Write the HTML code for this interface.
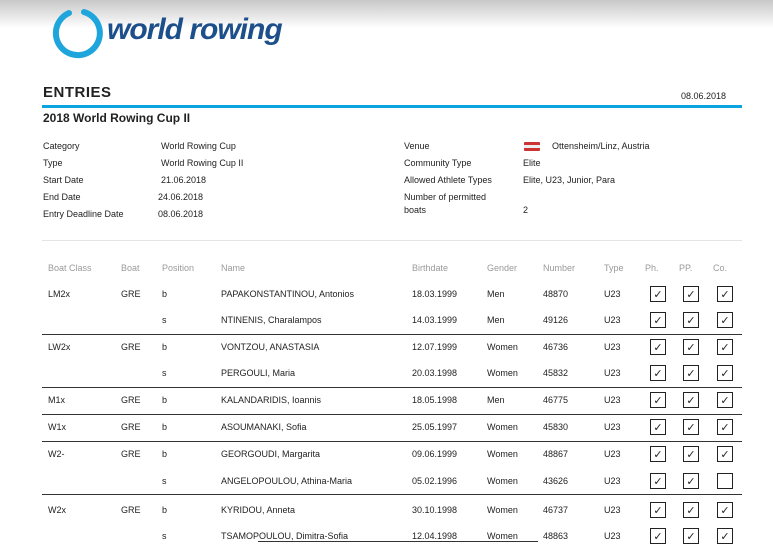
<!DOCTYPE html>
<html><head><meta charset="utf-8"><style>
body{margin:0;width:773px;height:544px;overflow:hidden;background:#fff;font-family:"Liberation Sans",sans-serif;color:#222;position:relative}
.t{position:absolute;font-size:9px;white-space:nowrap;line-height:11px}
.h{color:#9a9a9a}
.cb{position:absolute;width:14px;height:14px;border:1px solid #222;font-size:11px;line-height:15px;text-align:center;font-family:"DejaVu Sans",sans-serif}
.ln{position:absolute;left:42px;width:700px;height:1px;background:#333}
</style></head><body>
<div style="position:absolute;left:0;top:0;width:773px;height:28px;background:linear-gradient(#c8c8c8,#fff)"></div>
<svg style="position:absolute;left:47px;top:5px" width="58" height="58" viewBox="0 0 58 58"><path d="M22 8 A22 22 0 1 0 37 7" fill="none" stroke="#1ea5dc" stroke-width="6" stroke-linecap="round"/></svg>
<div style="position:absolute;left:107px;top:13px;font-size:30px;font-weight:bold;font-style:italic;color:#1d4f8a;letter-spacing:-1px">world rowing</div>
<div style="position:absolute;left:43px;top:84px;font-size:15px;font-weight:bold;letter-spacing:0.5px">ENTRIES</div>
<div class="t" style="left:681px;top:91px">08.06.2018</div>
<div style="position:absolute;left:42px;top:105px;width:700px;height:3px;background:#0aa5de"></div>
<div style="position:absolute;left:43px;top:111px;font-size:12px;font-weight:bold">2018 World Rowing Cup II</div>
<div class="t" style="left:43px;top:141px">Category</div><div class="t" style="left:161px;top:141px">World Rowing Cup</div>
<div class="t" style="left:43px;top:158px">Type</div><div class="t" style="left:161px;top:158px">World Rowing Cup II</div>
<div class="t" style="left:43px;top:175px">Start Date</div><div class="t" style="left:161px;top:175px">21.06.2018</div>
<div class="t" style="left:43px;top:192px">End Date</div><div class="t" style="left:158px;top:192px">24.06.2018</div>
<div class="t" style="left:43px;top:209px">Entry Deadline Date</div><div class="t" style="left:158px;top:209px">08.06.2018</div>
<div class="t" style="left:404px;top:141px">Venue</div>
<div style="position:absolute;left:524px;top:142px;width:16px;height:9px;border-radius:1px;background:linear-gradient(#c33 33%,#eee 33%,#eee 66%,#c33 66%)"></div>
<div class="t" style="left:552px;top:141px">Ottensheim/Linz, Austria</div>
<div class="t" style="left:404px;top:158px">Community Type</div><div class="t" style="left:523px;top:158px">Elite</div>
<div class="t" style="left:404px;top:175px">Allowed Athlete Types</div><div class="t" style="left:523px;top:175px">Elite, U23, Junior, Para</div>
<div class="t" style="left:404px;top:192px">Number of permitted</div>
<div class="t" style="left:404px;top:205px">boats</div><div class="t" style="left:523px;top:205px">2</div>
<div style="position:absolute;left:42px;top:240px;width:700px;height:1px;background:#e4e4e4"></div>
<div class="t h" style="left:48px;top:263px">Boat Class</div><div class="t h" style="left:121px;top:263px">Boat</div><div class="t h" style="left:162px;top:263px">Position</div><div class="t h" style="left:221px;top:263px">Name</div><div class="t h" style="left:412px;top:263px">Birthdate</div><div class="t h" style="left:487px;top:263px">Gender</div><div class="t h" style="left:543px;top:263px">Number</div><div class="t h" style="left:604px;top:263px">Type</div><div class="t h" style="left:645px;top:263px">Ph.</div><div class="t h" style="left:679px;top:263px">PP.</div><div class="t h" style="left:713px;top:263px">Co.</div>
<div id="rows"></div>
<div class="ln" style="top:334px"></div><div class="ln" style="top:387px"></div><div class="ln" style="top:414px"></div><div class="ln" style="top:441px"></div><div class="ln" style="top:494px"></div>
<div style="position:absolute;left:258px;top:541px;width:280px;height:1px;background:#333"></div>
<script>
var R=[[294,"LM2x","GRE","b","PAPAKONSTANTINOU, Antonios","18.03.1999","Men","48870",1],
[320,"","","s","NTINENIS, Charalampos","14.03.1999","Men","49126",1],
[347,"LW2x","GRE","b","VONTZOU, ANASTASIA","12.07.1999","Women","46736",1],
[373,"","","s","PERGOULI, Maria","20.03.1998","Women","45832",1],
[400,"M1x","GRE","b","KALANDARIDIS, Ioannis","18.05.1998","Men","46775",1],
[427,"W1x","GRE","b","ASOUMANAKI, Sofia","25.05.1997","Women","45830",1],
[454,"W2-","GRE","b","GEORGOUDI, Margarita","09.06.1999","Women","48867",1],
[481,"","","s","ANGELOPOULOU, Athina-Maria","05.02.1996","Women","43626",0],
[510,"W2x","GRE","b","KYRIDOU, Anneta","30.10.1998","Women","46737",1],
[536,"","","s","TSAMOPOULOU, Dimitra-Sofia","12.04.1998","Women","48863",1]];
var X=[48,121,162,221,412,487,543],h="";
R.forEach(function(r){var y=r[0]-5;for(var i=0;i<7;i++)h+='<div class="t" style="left:'+X[i]+'px;top:'+y+'px">'+r[i+1]+'</div>';
h+='<div class="t" style="left:604px;top:'+y+'px">U23</div>';
[650,683,717].forEach(function(x,j){h+='<div class="cb" style="left:'+x+'px;top:'+(r[0]-8)+'px">'+((j==2&&!r[8])?'':'✓')+'</div>'});});
document.getElementById("rows").innerHTML=h;
</script>
</body></html>
